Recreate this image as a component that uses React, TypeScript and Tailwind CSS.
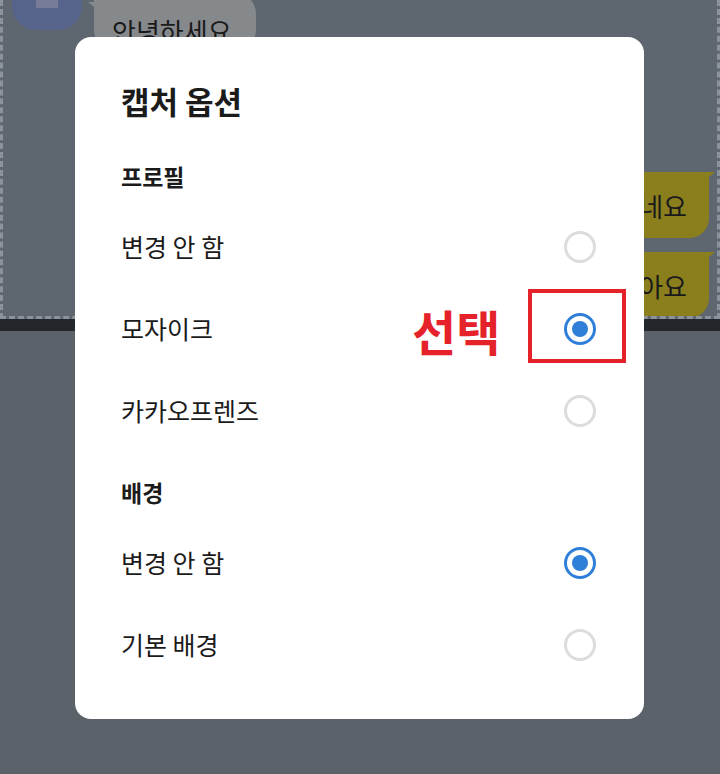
const profileOptions = [
  { label: "변경 안 함", checked: false },
  { label: "모자이크", checked: true },
  { label: "카카오프렌즈", checked: false },
]

const backgroundOptions = [
  { label: "변경 안 함", checked: true },
  { label: "기본 배경", checked: false },
]

function Radio({ checked }: { checked: boolean }) {
  if (checked) {
    return (
      <div className="w-8 h-8 rounded-full border-[3px] border-[#2f7fd8] flex items-center justify-center">
        <div className="w-4 h-4 rounded-full bg-[#2f7fd8]" />
      </div>
    )
  }
  return <div className="w-8 h-8 rounded-full border-[3px] border-[#dcdcdc]" />
}

function OptionRow({ label, checked }: { label: string; checked: boolean }) {
  return (
    <div className="h-[82px] flex items-center justify-between">
      <span className="text-[25px] text-[#1b1b1b]">{label}</span>
      <Radio checked={checked} />
    </div>
  )
}

function YellowBubble({ text }: { text: string }) {
  return (
    <div className="relative">
      <div className="absolute -right-[6px] top-0 w-0 h-0 border-t-[10px] border-t-[#8b7e1d] border-r-[12px] border-r-transparent" />
      <div className="h-[66px] w-[130px] rounded-[20px] rounded-tr-[4px] bg-[#8b7e1d] flex items-center justify-end pr-[22px]">
        <span className="text-[26px] text-[#1a1a1a]">{text}</span>
      </div>
    </div>
  )
}

export default function App() {
  return (
    <div
      className="relative w-[720px] h-[774px] overflow-hidden bg-[#5b626a]"
      style={{ fontFamily: '"Noto Sans CJK KR", "Noto Sans", sans-serif' }}
    >
      {/* Chat area behind the dialog */}
      <div className="h-[319px] bg-[#5e6670] border-x-[3px] border-b-[3px] border-dashed border-[#8c939b] overflow-hidden">
        <div className="flex items-start gap-3 pl-[9px] -mt-[32px]">
          <div className="w-[70px] h-[62px] rounded-[24px] bg-[#56648b] flex justify-center">
            <div className="w-[22px] h-[40px] bg-[#777d98]" />
          </div>
          <div className="relative mt-[32px]">
            <div className="absolute -left-[6px] top-[2px] w-0 h-0 border-t-[8px] border-t-[#86898c] border-l-[10px] border-l-transparent" />
            <div className="h-[60px] w-[162px] rounded-b-[22px] rounded-tr-[22px] rounded-tl-[6px] bg-[#86898c] -mt-[8px] flex items-end pl-[18px] pb-[8px]">
              <span className="text-[26px] text-[#1a1a1a] leading-none">안녕하세요</span>
            </div>
          </div>
        </div>
        <div className="flex flex-col items-end gap-[14px] mt-[120px] pr-[8px]">
          <YellowBubble text="좋네요" />
          <YellowBubble text="좋아요" />
        </div>
      </div>
      <div className="h-[12px] bg-[#23272b]" />

      {/* Dialog */}
      <div className="absolute left-[75px] top-[37px] w-[569px] h-[682px] bg-white rounded-[16px] pt-[44px] pl-[46px] pr-[48px]">
        <h2 className="h-[40px] flex items-center text-[31px] font-bold text-[#1b1b1b]">캡처 옵션</h2>
        <div className="mt-[25px] h-[60px] flex items-center text-[23px] font-semibold text-[#1b1b1b]">프로필</div>
        {profileOptions.map((o, i) => (
          <OptionRow key={i} label={o.label} checked={o.checked} />
        ))}
        <div className="mt-[10px] h-[60px] flex items-center text-[23px] font-semibold text-[#1b1b1b]">배경</div>
        {backgroundOptions.map((o, i) => (
          <OptionRow key={i} label={o.label} checked={o.checked} />
        ))}
      </div>

      {/* Annotation */}
      <div className="absolute left-[412px] top-[306px] text-[48px] font-bold text-[#e5212a] leading-none">선택</div>
      <div className="absolute left-[528px] top-[289px] w-[98px] h-[74px] border-[4px] border-[#e5212a]" />
    </div>
  )
}
